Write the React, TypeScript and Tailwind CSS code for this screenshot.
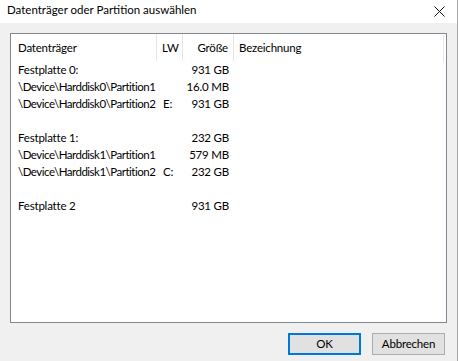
import React from 'react';

const ROWS = [
  { name: 'Festplatte 0:', lw: '', size: '931 GB' },
  { name: '\\Device\\Harddisk0\\Partition1', lw: '', size: '16.0 MB' },
  { name: '\\Device\\Harddisk0\\Partition2', lw: 'E:', size: '931 GB' },
  null,
  { name: 'Festplatte 1:', lw: '', size: '232 GB' },
  { name: '\\Device\\Harddisk1\\Partition1', lw: '', size: '579 MB' },
  { name: '\\Device\\Harddisk1\\Partition2', lw: 'C:', size: '232 GB' },
  null,
  { name: 'Festplatte 2', lw: '', size: '931 GB' },
];

export default function App() {
  return (
    <div
      className="w-[458px] h-[361px] bg-[#f0f0f0] flex flex-col text-[11.5px] tracking-[-0.2px] text-black border-r border-[#aaaaaa]"
      style={{ fontFamily: 'Lato, "Noto Sans", Arial, sans-serif' }}
    >
      {/* title bar */}
      <div className="h-[23px] bg-white flex items-center justify-between pl-[7px] pr-[12px]">
        <span className="text-[11.5px] tracking-normal leading-none -mt-[3px]">Datenträger oder Partition auswählen</span>
        <svg width="11" height="11" viewBox="0 0 11 11" className="-mt-[1px]">
          <path d="M0.5 0.5 L10.5 10.5 M10.5 0.5 L0.5 10.5" stroke="#111" strokeWidth="1" />
        </svg>
      </div>

      {/* list */}
      <div className="mt-[10px] ml-[10px] w-[437px] h-[290px] bg-white border border-[#828790] flex flex-col relative">
        <div className="h-[27px] flex items-center">
          <div className="w-[146px] h-full flex items-center pl-[7px] border-r border-[#e5e5e5]">Datenträger</div>
          <div className="w-[26px] h-full flex items-center pl-[5px] border-r border-[#e5e5e5]">LW</div>
          <div className="w-[51px] h-full flex items-center justify-end pr-[5px] border-r border-[#e5e5e5]">Größe</div>
          <div className="h-full flex items-center pl-[5px]">Bezeichnung</div>
        </div>
        <div className="absolute left-[432px] top-[1px] h-[27px] w-px bg-[#e8e8e8]" />
        {ROWS.map((r, i) =>
          r ? (
            <div key={i} className="h-[17px] flex items-center">
              <div
                className={`w-[146px] pl-[7px] whitespace-nowrap ${
                  r.name.startsWith('\\') ? 'tracking-[-0.5px]' : ''
                }`}
              >
                {r.name}
              </div>
              <div className="w-[26px] pl-[6px]">{r.lw}</div>
              <div className="w-[51px] text-right pr-[5px] whitespace-nowrap">{r.size}</div>
            </div>
          ) : (
            <div key={i} className="h-[17px]" />
          )
        )}
      </div>

      {/* buttons */}
      <div className="mt-[10px] flex justify-end gap-[11px] pr-[12px]">
        <button className="w-[73px] h-[22px] bg-[#e1e1e1] border-2 border-[#0078d7] flex items-center justify-center">
          OK
        </button>
        <button className="w-[73px] h-[22px] bg-[#e1e1e1] border border-[#adadad] flex items-center justify-center">
          Abbrechen
        </button>
      </div>
    </div>
  );
}
